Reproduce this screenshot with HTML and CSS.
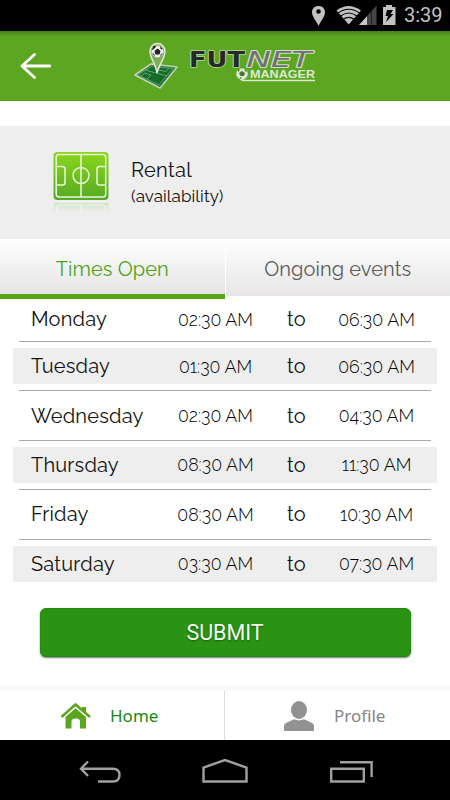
FILE: index.html
```html
<!DOCTYPE html>
<html lang="en">
<head>
<meta charset="utf-8">
<title>Futnet Manager</title>
<link rel="stylesheet" href="styles.css">
</head>
<body>
<div class="status">
  <svg width="72" height="31" viewBox="0 0 72 31">
    <path fill="#c2c2c2" fill-rule="evenodd" d="M8.500 6C4.500 6 2 8.700 2 12.300C2 16.500 5.500 20 8.500 26C11.500 20 15 16.500 15 12.300C15 8.700 12.500 6 8.500 6ZM8.500 9.200A2.300 2.300 0 1 1 8.500 13.800A2.300 2.300 0 0 1 8.500 9.200Z"/>
    <path fill="#c2c2c2" d="M26.500 10.500Q38.500 1.500 51 10.500L38.700 24.500Z"/>
    <g fill="none" stroke="#000" stroke-width="1.100"><path d="M27.500 13.500Q38.700 5 50 13.500"/><path d="M30 16.500Q38.700 9.500 47.500 16.500"/><path d="M33 19.700Q38.700 15 44.500 19.700"/></g>
    <path fill="#444" d="M49 25L66.500 5.500V25Z"/>
    <path fill="#c8c8c8" d="M49 25L57 16.300V25Z"/>
    <path stroke="#222" d="M61.500 10V25"/>
  </svg>
  <svg width="15" height="31" viewBox="0 0 15 31">
    <path fill="#c2c2c2" d="M1 7H4V5H10V7H13.500V25H1Z"/>
    <path fill="#000" d="M5 10H11L8.500 14H11.500L4 22L6 16H3.500Z"/>
  </svg>
  <span class="clock">3:39</span>
</div>
<header class="appbar">
  <svg width="32" height="28" viewBox="0 0 32 28"><path d="M15.500 2.500L3 14L15.500 25.500M3 14H31" fill="none" stroke="#fff" stroke-width="2.800" stroke-linecap="round" stroke-linejoin="round"/></svg>
  <svg class="logo" width="190" height="54" viewBox="130 38 190 54">
    <path d="M135 75L151 64L177 67L160 88Z" fill="#176b2c" stroke="#c4d2ba" stroke-width="1.600" stroke-linejoin="round"/>
    <path d="M138 75L152 66L173 68.500L159 85ZM145 70L167 76M147 79L151 75L145 73L141 76M161 67L158 70L166 71.500L169 68" fill="none" stroke="#68a86d" stroke-width=".9"/>
    <path d="M157 73C156 64 150 59 150 51A7.500 7.500 0 0 1 165 51C165 59 159 64 157 73Z" fill="#7fac58" stroke="#e1ead8" stroke-width="1.500"/>
    <circle cx="157.500" cy="51.500" r="6" fill="#eee"/>
    <path d="M157.500 48.500L160.500 51L159.500 54.500H155.500L154.500 51ZM151.700 50L153.500 46L156.500 46L153.500 49.500ZM159.500 46L163 49L161 49.500ZM152 53L154 54L155 57ZM163 53L161 54L160 57Z" fill="#222"/>
    <g class="wordmark" stroke-linejoin="round">
      <text x="189" y="66.500" textLength="56" lengthAdjust="spacingAndGlyphs" class="fut">FUT</text>
      <text x="246.500" y="66.500" textLength="65" lengthAdjust="spacingAndGlyphs" class="net">NET</text>
    </g>
    <path d="M240 78Q241 80.500 244 80.500H315" fill="none" stroke="#dce9d1" stroke-width="1.500"/>
    <circle cx="242" cy="74" r="5.800" fill="#dce9d1"/>
    <path d="M242 71L245 73L244 76H240.500L239 73ZM238 69L240 70L238 72ZM245 69L247 72L244.500 71ZM239 78L241 77L241.500 79Z" fill="#4c7332"/>
    <text x="250" y="78" textLength="65" lengthAdjust="spacingAndGlyphs" class="manager">MANAGER</text>
  </svg>
</header>
<section class="rental">
  <svg width="56" height="62" viewBox="0 0 56 62">
    <defs>
      <linearGradient id="grass" x2="0" y2="1"><stop stop-color="#8cd61c"/><stop offset="1" stop-color="#55aa24"/></linearGradient>
      <linearGradient id="fade" x2="0" y2="1"><stop stop-color="#cbe2c3"/><stop offset="1" stop-color="#eee"/></linearGradient>
    </defs>
    <rect x=".5" y="0" width="55" height="48" rx="4" fill="url(#grass)"/>
    <g fill="none" stroke="#eaf6dd" stroke-width="1.500">
      <rect x="3.200" y="2.500" width="49.500" height="42.500" rx="3"/>
      <path d="M28 2.500V45M3.200 14.500H9.500Q12 14.500 12 17V30.500Q12 33 9.500 33H3.200M52.700 14.500H46.500Q44 14.500 44 17V30.500Q44 33 46.500 33H52.700"/>
      <circle cx="28" cy="23.500" r="8"/>
    </g>
    <path d="M.5 49.500Q1 51 4 51H52Q55 51 55.500 49.500V60H.5Z" fill="url(#fade)"/>
    <path d="M3.500 60V56Q3.500 53 6.500 53H49.500Q52.500 53 52.500 56V60M28 53V60" fill="none" stroke="#f3f6f1"/>
  </svg>
  <div class="rental-text"><h1>Rental</h1><p>(availability)</p></div>
</section>
<nav class="tabs"><a class="tab active"><span>Times Open</span></a><a class="tab"><span>Ongoing events</span></a></nav>
<ul class="times">
  <li><div class="row"><span class="day">Monday</span><span class="time">02:30 AM</span><span class="to">to</span><span class="time">06:30 AM</span></div></li>
  <li><div class="row shade"><span class="day">Tuesday</span><span class="time">01:30 AM</span><span class="to">to</span><span class="time">06:30 AM</span></div></li>
  <li><div class="row"><span class="day">Wednesday</span><span class="time">02:30 AM</span><span class="to">to</span><span class="time">04:30 AM</span></div></li>
  <li><div class="row shade"><span class="day">Thursday</span><span class="time">08:30 AM</span><span class="to">to</span><span class="time">11:30 AM</span></div></li>
  <li><div class="row"><span class="day">Friday</span><span class="time">08:30 AM</span><span class="to">to</span><span class="time">10:30 AM</span></div></li>
  <li><div class="row shade"><span class="day">Saturday</span><span class="time">03:30 AM</span><span class="to">to</span><span class="time">07:30 AM</span></div></li>
</ul>
<button class="submit">SUBMIT</button>
<footer class="bottom">
  <a class="link home"><svg width="32" height="28" viewBox="0 0 32 28"><path d="M1.500 15L15.500 2.500L30 15" fill="none" stroke="#5ca51f" stroke-width="2.600"/><path d="M5.500 15L15.500 6.200L26 15V26.500H20V19.500Q20 16.500 15.500 16.500Q11.500 16.500 11.500 19.500V26.500H5.500ZM22 5H26V11L22 7.500Z" fill="#5ca51f"/></svg><span>Home</span></a>
  <a class="link profile"><svg width="32" height="32" viewBox="0 0 32 32"><ellipse cx="16" cy="10" rx="8" ry="9" fill="#929292"/><path d="M1 30V26Q1 24 3 23L11 19.300Q16 21.500 21 19.300L29 23Q31 24 31 26V30Q31 31 30 31H2Q1 31 1 30Z" fill="#929292"/></svg><span>Profile</span></a>
</footer>
<div class="sysnav">
  <svg width="450" height="60" viewBox="0 0 450 60" fill="none" stroke="#a0a0a0" stroke-width="2.400">
    <path d="M88 21.500L81 28.700L88 36M81 28.700H113Q119.500 28.700 119.500 35T113 41.500H98"/>
    <path d="M203.500 41.500V27.500L225 20L246.500 27.500V41.500Z"/>
    <path d="M331.200 28.700H363.800V41.500H331.200ZM340 22.200H371.600V37"/>
  </svg>
</div>
</body>
</html>
```
FILE: styles.css
```css
* { box-sizing: border-box; }
body { margin: 0; width: 450px; height: 800px; overflow: hidden; display: flex; flex-direction: column; background: #fff; color: #111; font-family: Raleway, Lato, sans-serif; font-weight: 400; }
h1, p, ul { margin: 0; padding: 0; font-weight: inherit; }
svg { display: block; flex: none; }
.status { height: 31px; flex: none; background: #000; display: flex; align-items: center; padding-left: 310px; }
.clock { margin-left: 7px; font: 400 20px/31px Roboto, sans-serif; color: #c2c2c2; white-space: nowrap; }
.appbar { height: 70px; flex: none; background: linear-gradient(#477f1b, #5ca621 6px, #5ca621 69px, #4e9d15 69px); display: flex; align-items: center; padding: 0 0 0 19px; }
.logo { margin-left: 79px; margin-top: -2px; }
.wordmark { font: 700 20.5px "DejaVu Sans", sans-serif; paint-order: stroke; }
.fut { fill: #262a26; stroke: #b4d39b; stroke-width: 1.6px; }
.net { fill: #707070; stroke: #cfdcc5; stroke-width: 1.8px; font-style: italic; font-weight: 400; }
.manager { font: 700 10px "Liberation Sans", sans-serif; fill: #dce9d1; }
.rental { height: 113px; flex: none; margin-top: 25px; background: #eee; display: flex; align-items: center; padding-left: 53px; }
.rental-text { margin-left: 22px; margin-top: -2px; }
.rental h1 { font-size: 20px; line-height: 28px; letter-spacing: .3px; }
.rental p { font-size: 17px; line-height: 24px; letter-spacing: .1px; }
.tabs { height: 60px; flex: none; display: flex; }
.tab { flex: 1; height: 57px; background: linear-gradient(#fefefe, #e7e5e6); display: flex; justify-content: center; align-items: center; padding-top: 2px; font-size: 20px; letter-spacing: .1px; color: #5b5b5b; border-left: 1px solid #fff; }
.tab.active { height: 60px; padding-top: 4px; color: #4aa315; border-left: 0; border-bottom: 5px solid #58a618; }
.times { list-style: none; width: 412px; margin: -7px auto 0; position: relative; }
.times li { height: 49.4px; border-bottom: 1px solid #aaa; display: flex; align-items: center; }
.times li:first-child { height: 50px; }
.times li:last-child { border-bottom-color: transparent; }
.row { height: 36px; flex: 1; margin: 0 -6px; display: grid; grid-template-columns: 146px 113px 49px 111px; align-items: center; font-size: 20px; white-space: nowrap; }
li:first-child .row { padding-top: 5px; }
.shade { background: #eee; }
.day { padding-left: 18px; letter-spacing: .2px; }
.time { text-align: center; font-size: 17.8px; font-weight: 300; color: #000; }
.to { text-align: center; letter-spacing: .4px; }
.submit { width: 371px; height: 49px; flex: none; margin: 19px auto 0; padding: 0; border: 1px solid #1d8d09; border-radius: 6px; background: #2a9314; box-shadow: 0 1px 2px #777; color: #f4fbf2; font: 400 21.500px Roboto, sans-serif; text-shadow: 0 1px 2px #166006; }
.bottom { height: 55px; flex: none; margin-top: auto; border-top: 6px solid #fafafa; display: flex; }
.link { width: 225px; display: flex; align-items: center; font: 400 17px "Noto Sans", sans-serif; color: #858585; }
.home { padding-left: 60px; color: #178a12; border-right: 1px solid #ddd; }
.home span { margin-left: 18px; }
.profile { padding-left: 58px; }
.profile span { margin-left: 19px; }
.sysnav { height: 60px; flex: none; background: #000; }
```
